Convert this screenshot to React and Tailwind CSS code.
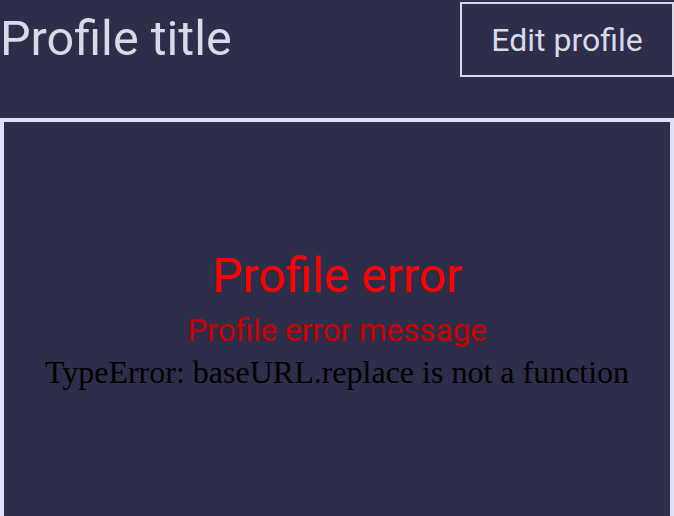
export default function App() {
  return (
    <div className="min-h-screen bg-[#2e2e4a] overflow-hidden" style={{ fontFamily: 'Roboto, "Liberation Sans", sans-serif' }}>
      {/* Header */}
      <div className="flex items-start justify-between h-[118px]">
        <h1 className="text-[48.5px] leading-[56px] mt-[11px] text-[#d9d9e8] font-normal">Profile title</h1>
        <button className="mt-[2px] w-[214px] h-[75px] border-2 border-[#d9d9e8] text-[32px] text-[#d9d9e8] flex items-center justify-center">
          Edit profile
        </button>
      </div>

      {/* Error panel */}
      <div className="h-[402px] border-4 border-[#e0e0f6] flex flex-col items-center justify-center text-center">
        <div className="text-[48px] leading-[56px] text-[#ff0000]">Profile error</div>
        <div className="mt-[8px] text-[31.4px] leading-[38px] text-[#cc0000]">Profile error message</div>
        <div className="mt-[4px] text-[32px] leading-[36px] text-black" style={{ fontFamily: '"Liberation Serif", serif' }}>
          TypeError: baseURL.replace is not a function
        </div>
      </div>
    </div>
  );
}
